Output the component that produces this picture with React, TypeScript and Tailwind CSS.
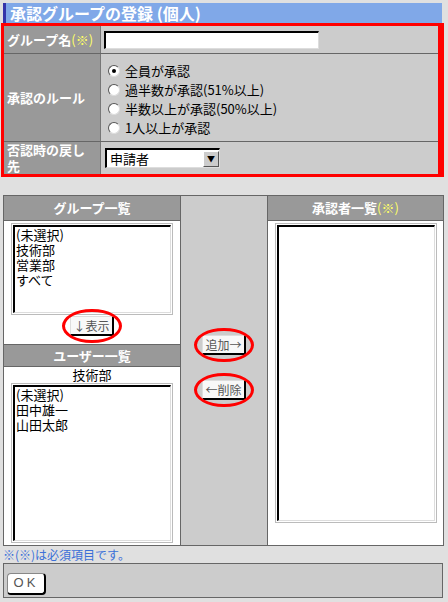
import React from "react";

type ListProps = { items: string[]; className: string };

const ListBox: React.FC<ListProps> = ({ items, className }) => (
  <div className={`border border-[#bbbbbb] bg-white p-[1px] ${className}`}>
    <div className="h-full border-t-2 border-l-2 border-r border-b border-t-black border-l-black border-r-[#dddddd] border-b-[#dddddd] pl-[1px] text-[13px] leading-[15px] text-black">
      {items.map((item) => (
        <div key={item}>{item}</div>
      ))}
    </div>
  </div>
);

const Circled: React.FC<{ children: React.ReactNode }> = ({ children }) => (
  <span className="relative inline-flex">
    {children}
    <span className="absolute -left-[8px] -right-[8px] -top-[7px] -bottom-[7px] rounded-[50%] border-[3px] border-[#ff0000]" />
  </span>
);

const SmallButton: React.FC<{ label: string }> = ({ label }) => (
  <button className="h-[20px] px-[2px] bg-[#f8f8f8] border border-t-[#dddddd] border-l-[#dddddd] border-r-2 border-b-2 border-r-black border-b-black text-[12px] leading-[16px] text-[#555555]">
    {label}
  </button>
);

const Radio: React.FC<{ label: string; checked?: boolean }> = ({ label, checked }) => (
  <div className="flex items-center h-[19px]">
    <span className="ml-[7px] w-[12px] h-[12px] rounded-full bg-white border border-t-[#555555] border-l-[#555555] border-r-[#dddddd] border-b-[#dddddd] flex items-center justify-center">
      {checked && <span className="w-[4px] h-[4px] rounded-full bg-black" />}
    </span>
    <span className="ml-[5px] text-[13px] leading-[16px] text-black">{label}</span>
  </div>
);

const Label: React.FC<{ children: React.ReactNode }> = ({ children }) => (
  <div className="w-[97px] shrink-0 bg-[#999999] border-r border-[#777777] pl-[3px] flex items-center text-white font-bold text-[13px] leading-[16px]">
    {children}
  </div>
);

const Header: React.FC<{ children: React.ReactNode; tall?: boolean }> = ({ children, tall }) => (
  <div
    className={`${tall ? "h-[25px]" : "h-[22px]"} shrink-0 bg-[#999999] border-b border-[#666666] flex items-center justify-center text-white font-bold text-[13px]`}
  >
    {children}
  </div>
);

export default function App() {
  return (
    <div className="w-[448px] h-[602px] bg-[#e0e0e0] pt-[3px] overflow-hidden font-['Noto_Sans_CJK_JP',sans-serif]">
      <div className="ml-[3px] w-[439px] h-[20px] bg-[#80a8e8] border-l-[3px] border-[#3434aa] pl-[4px] text-white text-[16px] leading-[20px] font-bold">
        承認グループの登録 (個人)
      </div>

      <div className="ml-[1px] w-[443px] border-[3px] border-r-[6px] border-[#ff0000] bg-[#cccccc]">
        <div className="flex h-[28px] border-b border-[#666666]">
          <Label>
            グループ名<span className="text-[#ffff66] font-normal">(※)</span>
          </Label>
          <div className="flex items-center pl-[3px]">
            <div className="w-[215px] h-[18px] bg-white border-t-2 border-l-2 border-r border-b border-t-black border-l-black border-r-[#dddddd] border-b-[#dddddd]" />
          </div>
        </div>

        <div className="flex h-[88px] border-b border-[#666666]">
          <Label>承認のルール</Label>
          <div className="flex flex-col pt-[7px]">
            <Radio label="全員が承認" checked />
            <Radio label="過半数が承認(51%以上)" />
            <Radio label="半数以上が承認(50%以上)" />
            <Radio label="1人以上が承認" />
          </div>
        </div>

        <div className="flex h-[32px]">
          <Label>
            否認時の戻し
            <br />先
          </Label>
          <div className="flex items-center pl-[4px]">
            <div className="w-[115px] h-[20px] bg-white border-t-2 border-l-2 border-r border-b border-t-black border-l-black border-r-[#dddddd] border-b-[#dddddd] flex items-center justify-between">
              <span className="pl-[3px] text-[13px] leading-[16px] text-black">申請者</span>
              <span className="w-[16px] h-[16px] bg-[#cccccc] border border-t-white border-l-white border-r-[#555555] border-b-[#555555] flex items-center justify-center text-[8px] leading-[8px] text-black">
                ▼
              </span>
            </div>
          </div>
        </div>
      </div>

      <div className="mt-[18px] ml-[3px] w-[441px] h-[351px] border border-[#666666] flex">
        <div className="w-[177px] border-r border-[#666666] bg-white flex flex-col">
          <Header tall>グループ一覧</Header>
          <ListBox items={["(未選択)", "技術部", "営業部", "すべて"]} className="mt-[2px] mx-[7px] h-[92px]" />
          <div className="flex justify-center mt-[1px]">
            <Circled>
              <SmallButton label="↓表示" />
            </Circled>
          </div>
          <div className="mt-[8px] border-t border-[#666666]">
            <Header>ユーザー一覧</Header>
          </div>
          <div className="h-[16px] flex items-center justify-center text-[13px] leading-[16px] text-black">技術部</div>
          <ListBox items={["(未選択)", "田中雄一", "山田太郎"]} className="mx-[7px] h-[160px]" />
        </div>

        <div className="w-[87px] border-r border-[#666666] bg-[#cccccc] flex flex-col items-center pt-[139px] gap-[25px]">
          <Circled>
            <SmallButton label="追加→" />
          </Circled>
          <Circled>
            <SmallButton label="←削除" />
          </Circled>
        </div>

        <div className="flex-1 bg-white flex flex-col">
          <Header tall>
            承認者一覧<span className="text-[#ffff66] font-normal">(※)</span>
          </Header>
          <ListBox items={[]} className="mt-[2px] ml-[7px] mr-[6px] h-[300px]" />
        </div>
      </div>

      <div className="h-[17px] pl-[3px] text-[12px] leading-[17px] text-[#3a6fd8]">※(※)は必須項目です。</div>

      <div className="ml-[3px] w-[440px] h-[35px] border border-[#666666] bg-[#cccccc] pt-[4px] pl-[3px]">
        <button className="w-[39px] h-[22px] rounded-[4px] bg-white border border-[#888888] border-r-2 border-b-2 border-r-black border-b-black text-[13px] leading-[16px] tracking-[3px] text-[#555555] font-['Liberation_Sans',sans-serif]">
          OK
        </button>
      </div>
    </div>
  );
}
